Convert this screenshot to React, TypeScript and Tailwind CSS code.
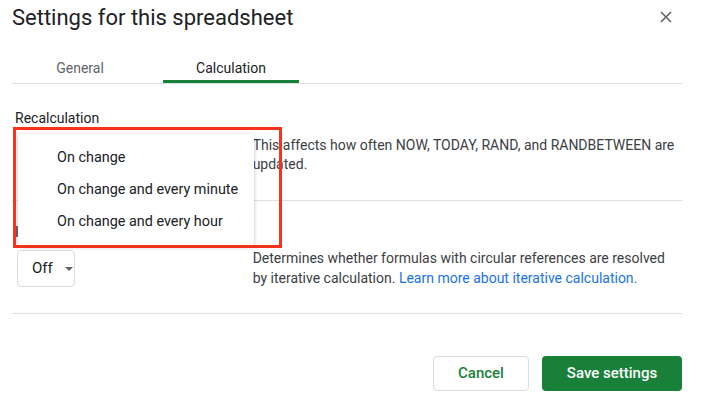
import type { ReactNode } from "react";

function Section({ label, children, last }: { label: string; children: ReactNode; last?: boolean }) {
    return (
        <div className={`border-b border-[#e0e0e0] ${last ? "pt-[21px] pb-[25px]" : "pt-[24px] pb-[26px]"}`}>
            <div className="pl-[3px] text-[14px] leading-[20px] text-[#202124]">{label}</div>
            <div className="mt-2 flex items-start">{children}</div>
        </div>
    );
}

function SelectBox({ value }: { value: string }) {
    return (
        <div className="ml-[5px] flex h-[37px] w-[58px] items-center rounded-[4px] border border-[#dadce0] pl-[14px]">
            <span className="text-[15px] text-[#202124]">{value}</span>
            <svg className="ml-[12px]" width="8" height="4" viewBox="0 0 8 4">
                <path d="M0 0 L8 0 L4 4 Z" fill="#5f6368" />
            </svg>
        </div>
    );
}

export default function App() {
    const options = ["On change", "On change and every minute", "On change and every hour"];

    return (
        <div className="relative min-h-[409px] w-[701px] bg-white pl-3 pr-[19px] font-['Roboto',sans-serif]">
            <div className="flex h-[34px] items-center justify-between">
                <h1 className="text-[22px] font-normal text-[#202124]">Settings for this spreadsheet</h1>
                <svg className="mr-[10px]" width="12" height="12" viewBox="0 0 12 12">
                    <path d="M1 1 L11 11 M11 1 L1 11" stroke="#5f6368" strokeWidth="1.6" />
                </svg>
            </div>

            <div className="mt-[18px] flex gap-[15px] border-b border-[#e0e0e0]">
                <div className="flex h-[31px] w-[136px] items-center justify-center pt-[4px] pb-[3px] text-[14px] text-[#5f6368]">
                    General
                </div>
                <div className="flex h-[31px] w-[136px] items-center justify-center border-b-[3px] border-[#188038] pt-[4px] text-[14px] text-[#202124]">
                    Calculation
                </div>
            </div>

            <Section label="Recalculation">
                <div className="w-[241px]">
                    <div className="ml-[5px] h-[37px] w-[58px]" />
                </div>
                <p className="w-[430px] text-[14px] leading-[19px] text-[#3c4043]">
                    This affects how often NOW, TODAY, RAND, and RANDBETWEEN are updated.
                </p>
            </Section>

            <Section label="Iterative calculation" last>
                <div className="w-[241px]">
                    <SelectBox value="Off" />
                </div>
                <p className="-mt-[2px] w-[430px] text-[14px] leading-[20px] text-[#3c4043]">
                    Determines whether formulas with circular references are resolved by iterative calculation.{" "}
                    <span className="text-[#1a73e8]">Learn more about iterative calculation.</span>
                </p>
            </Section>

            <div className="mt-[42px] flex justify-end gap-[13px]">
                <button className="h-[35px] w-[96px] rounded-[4px] border border-[#dadce0] text-[15px] font-medium text-[#188038]">
                    Cancel
                </button>
                <button className="h-[35px] w-[140px] rounded-[4px] bg-[#188038] text-[15px] font-medium text-white">
                    Save settings
                </button>
            </div>

            <div className="absolute left-[18px] top-[134px] w-[236px] rounded-[4px] bg-white py-2 shadow-[0_1px_4px_rgba(0,0,0,0.25)]">
                {options.map((o) => (
                    <div key={o} className="flex h-[32px] items-center pl-[39px] text-[14.4px] text-[#202124]">
                        {o}
                    </div>
                ))}
            </div>

            <div className="absolute left-[13px] top-[127px] h-[121px] w-[269px] border-[3px] border-[#f8321c]" />
        </div>
    );
}
